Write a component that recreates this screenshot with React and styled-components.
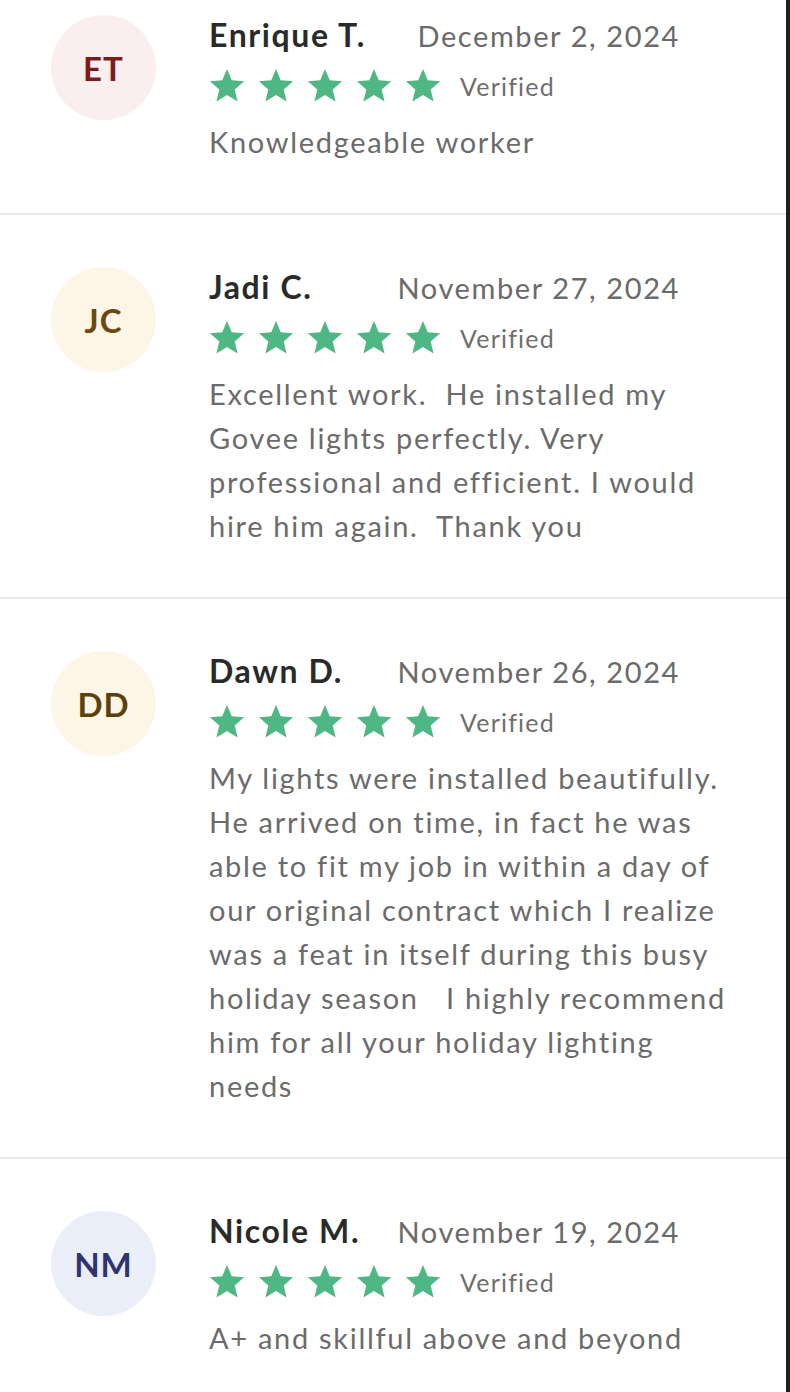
import React from "react";
import styled, { createGlobalStyle } from "styled-components";

const GlobalStyle = createGlobalStyle`
  html, body { margin: 0; padding: 0; background: #ffffff; }
  body { font-family: Lato, "Open Sans", sans-serif; -webkit-font-smoothing: antialiased; }
`;

const Page = styled.div`
  display: flex;
  min-height: 100vh;
  overflow: hidden;
`;

const Main = styled.main`
  flex: 1;
  background: #ffffff;
  overflow: hidden;
`;

const Edge = styled.div`
  width: 4px;
  flex: 0 0 4px;
  background: #1f1f1f;
`;

const List = styled.div`
  display: flex;
  flex-direction: column;
  margin-top: -37px;
`;

const Review = styled.article`
  display: grid;
  grid-template-columns: 105px 1fr;
  column-gap: 53px;
  padding: 52px 46px 49px 51px;
  border-bottom: 2px solid #ececec;
`;

const Avatar = styled.div`
  width: 105px;
  height: 105px;
  border-radius: 50%;
  background: ${(p) => p.$bg};
  color: ${(p) => p.$fg};
  display: flex;
  align-items: center;
  justify-content: center;
  font-weight: 700;
  font-size: 33px;
  letter-spacing: 1px;
`;

const Body = styled.div`
  display: flex;
  flex-direction: column;
  min-width: 0;
`;

const Header = styled.div`
  display: flex;
  justify-content: space-between;
  align-items: baseline;
  max-width: 471px;
  height: 40px;
  line-height: 40px;
`;

const Name = styled.span`
  font-weight: 700;
  font-size: 32px;
  color: #2a2a2a;
  letter-spacing: 1.6px;
`;

const DateText = styled.span`
  font-size: 29px;
  color: #6a6a6a;
  letter-spacing: 1.6px;
`;

const RatingRow = styled.div`
  display: flex;
  align-items: center;
  margin-top: 14px;
  height: 34px;
`;

const Stars = styled.div`
  display: flex;
  gap: 13px;
`;

const Verified = styled.span`
  margin-left: 19px;
  font-size: 25px;
  color: #6e6e6e;
  letter-spacing: 1.2px;
`;

const Text = styled.p`
  margin: 17px 0 0;
  font-size: 29px;
  line-height: 44px;
  color: #6b6b6b;
  letter-spacing: 1.7px;
  white-space: pre-wrap;
`;

const Star = () => (
  <svg width="36" height="36" viewBox="0 0 24 24" aria-hidden="true">
    <polygon
      fill="#4fb783"
      points="12,0.6 15.17,8.23 23.41,8.89 17.14,14.27 19.05,22.31 12,18 4.95,22.31 6.86,14.27 0.59,8.89 8.83,8.23"
    />
  </svg>
);

const reviews = [
  {
    initials: "ET",
    bg: "#fbeeee",
    fg: "#7b1c1c",
    name: "Enrique T.",
    date: "December 2, 2024",
    text: "Knowledgeable worker",
  },
  {
    initials: "JC",
    bg: "#fdf6e7",
    fg: "#6a4a12",
    name: "Jadi C.",
    date: "November 27, 2024",
    text: "Excellent work.  He installed my Govee lights perfectly. Very professional and efficient. I would hire him again.  Thank you",
  },
  {
    initials: "DD",
    bg: "#fdf6e7",
    fg: "#5e400c",
    name: "Dawn D.",
    date: "November 26, 2024",
    text: "My lights were installed beautifully. He arrived on time, in fact he was able to fit my job in within a day of our original contract which I realize was a feat in itself during this busy holiday season   I highly recommend him for all your holiday lighting needs",
  },
  {
    initials: "NM",
    bg: "#eaeef9",
    fg: "#2f3472",
    name: "Nicole M.",
    date: "November 19, 2024",
    text: "A+ and skillful above and beyond",
  },
];

export default function App() {
  return (
    <>
      <GlobalStyle />
      <Page>
        <Main>
          <List>
            {reviews.map((r) => (
              <Review key={r.initials}>
                <Avatar $bg={r.bg} $fg={r.fg}>
                  {r.initials}
                </Avatar>
                <Body>
                  <Header>
                    <Name>{r.name}</Name>
                    <DateText>{r.date}</DateText>
                  </Header>
                  <RatingRow>
                    <Stars>
                      {[0, 1, 2, 3, 4].map((i) => (
                        <Star key={i} />
                      ))}
                    </Stars>
                    <Verified>Verified</Verified>
                  </RatingRow>
                  <Text>{r.text}</Text>
                </Body>
              </Review>
            ))}
          </List>
        </Main>
        <Edge />
      </Page>
    </>
  );
}
